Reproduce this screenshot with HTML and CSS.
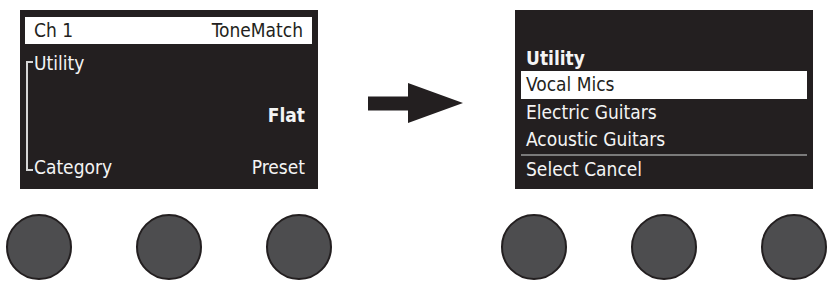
FILE: index.html
```html
<!DOCTYPE html>
<html>
<head>
<meta charset="utf-8">
<link rel="stylesheet" href="styles.css">
</head>
<body>
<div class="stage">
  <div class="panel">
    <div class="screen screen-left">
      <div class="header"><span>Ch 1</span><span>ToneMatch</span></div>
      <div class="body">
        <div class="bracket"></div>
        <div class="rows">
          <div class="row"><span>Utility</span></div>
          <div class="row"></div>
          <div class="row row-end"><span class="bold">Flat</span></div>
          <div class="row"></div>
          <div class="row row-split"><span>Category</span><span>Preset</span></div>
        </div>
      </div>
    </div>
    <div class="knobs">
      <div class="knob"></div>
      <div class="knob"></div>
      <div class="knob"></div>
    </div>
  </div>
  <div class="arrow-col">
    <svg class="arrow" width="96" height="41" viewBox="0 0 96 41">
      <rect x="0" y="13.5" width="42" height="14" fill="#231f20"/>
      <polygon points="40,0 95,20 40,40" fill="#231f20"/>
    </svg>
  </div>
  <div class="panel">
    <div class="screen screen-right">
      <div class="menu-line bold">Utility</div>
      <div class="menu-line selected">Vocal Mics</div>
      <div class="menu-line">Electric Guitars</div>
      <div class="menu-line">Acoustic Guitars</div>
      <div class="separator"></div>
      <div class="menu-line">Select Cancel</div>
    </div>
    <div class="knobs">
      <div class="knob"></div>
      <div class="knob"></div>
      <div class="knob"></div>
    </div>
  </div>
</div>
</body>
</html>
```
FILE: styles.css
```css
html, body {
  margin: 0;
  padding: 0;
  background: #ffffff;
}

body {
  font-family: "DejaVu Sans Condensed", "DejaVu Sans", sans-serif;
  font-stretch: condensed;
  font-size: 19px;
  color: #f4f4f4;
}

.stage {
  display: flex;
  padding-left: 6px;
  padding-top: 10px;
}

.panel {
  width: 326px;
  display: flex;
  flex-direction: column;
}

.screen {
  margin: 0 14px;
  height: 179px;
  box-sizing: border-box;
  background: #231f20;
}

.screen-left {
  padding: 7px 6px 0 5px;
}

.header {
  height: 27px;
  line-height: 26px;
  background: #ffffff;
  color: #231f20;
  display: flex;
  justify-content: space-between;
  padding: 0 9px 0 9px;
}

.body {
  display: flex;
  margin-top: 6px;
}

.bracket {
  margin-left: 1px;
  margin-top: 11px;
  width: 5px;
  height: 106px;
  border-left: 2px solid #d6d6d6;
  border-top: 2px solid #d6d6d6;
  border-bottom: 2px solid #d6d6d6;
}

.rows {
  flex: 1;
  display: flex;
  flex-direction: column;
  padding-left: 1px;
  padding-right: 7px;
}

.row {
  height: 26px;
  line-height: 26px;
  display: flex;
}

.row-end {
  justify-content: flex-end;
}

.row-split {
  justify-content: space-between;
}

.bold {
  font-weight: bold;
}

.screen-right {
  padding: 35px 6px 0 6px;
}

.menu-line {
  height: 27px;
  line-height: 27px;
  padding-left: 5px;
}

.selected {
  background: #ffffff;
  color: #231f20;
  margin-top: -1px;
  height: 28px;
}

.separator {
  height: 2px;
  background: #7a7a7a;
  margin-top: 1px;
  margin-bottom: 0;
}

.knobs {
  margin-top: 25px;
  display: flex;
  justify-content: space-between;
}

.knob {
  width: 62px;
  height: 62px;
  border-radius: 50%;
  background: #4d4d4f;
  border: 2px solid #231f20;
}

.arrow-col {
  width: 169px;
  display: flex;
  align-items: flex-start;
}

.arrow {
  margin-top: 73px;
  margin-left: 36px;
}
```
